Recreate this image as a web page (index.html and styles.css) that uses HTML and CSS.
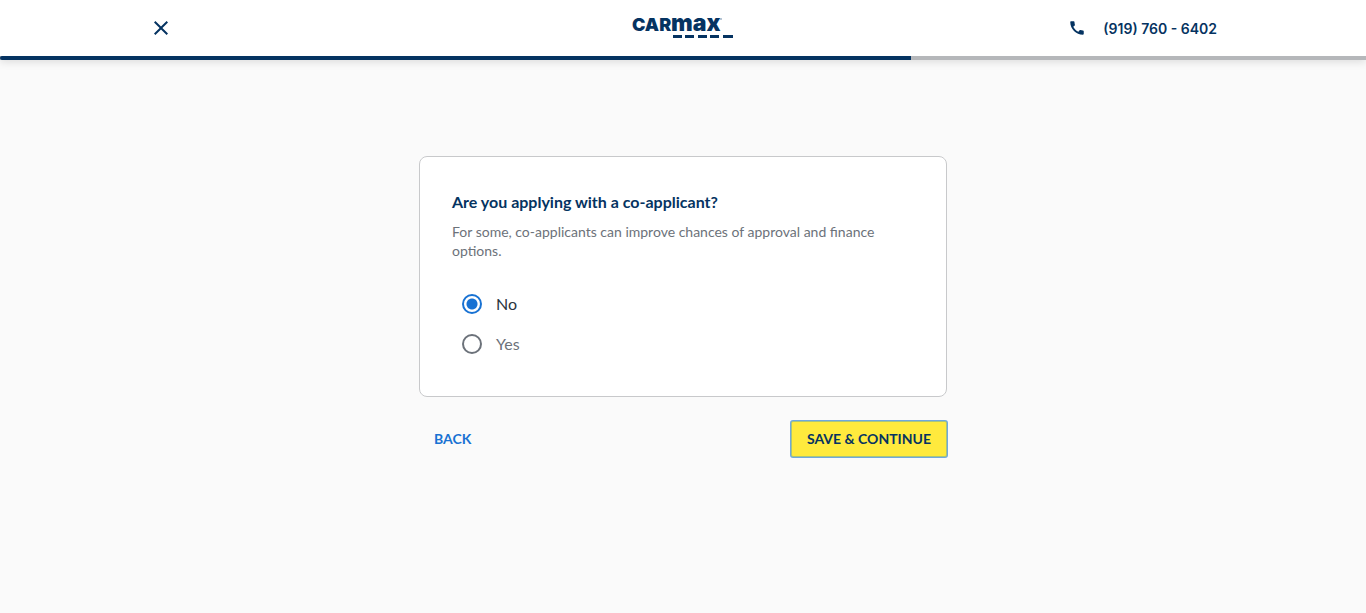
FILE: index.html
```html
<!DOCTYPE html>
<html lang="en">
<head>
<meta charset="utf-8">
<meta name="viewport" content="width=device-width, initial-scale=1">
<title>Co-applicant | CarMax</title>
<link rel="stylesheet" href="styles.css">
</head>
<body>
<header class="header">
  <div class="header-inner">
    <button class="close" type="button" aria-label="Close">
      <svg width="24" height="24" viewBox="0 0 24 24" aria-hidden="true"><path fill="currentColor" d="M19 6.41 17.59 5 12 10.59 6.41 5 5 6.41 10.59 12 5 17.59 6.41 19 12 13.41 17.59 19 19 17.59 13.41 12z"/></svg>
    </button>
    <a class="logo" href="#" aria-label="CarMax home">
      <svg width="102" height="48" viewBox="0 -12 102 48" aria-hidden="true">
        <text class="logo-text logo-car" x="0" y="15">CAR</text>
        <text class="logo-text logo-max" x="39" y="15">max</text>
        <circle cx="89" cy="3" r="1" fill="#9fb0c4"/>
        <path fill="#053361" d="M41 19h9v3h-9zM53 19h9v3h-9zM66 19h9v3h-9zM78 19h9v3h-9zM91 19h10v3H91z"/>
      </svg>
    </a>
    <a class="phone" href="tel:+19197606402">
      <svg width="18" height="18" viewBox="0 0 24 24" aria-hidden="true"><path fill="currentColor" d="M20.01 15.38c-1.23 0-2.42-.2-3.53-.56-.35-.12-.74-.03-1.01.24l-1.57 1.97c-2.83-1.35-5.48-3.9-6.89-6.83l1.95-1.66c.27-.28.35-.67.24-1.02-.37-1.11-.56-2.3-.56-3.53 0-.54-.45-.99-.99-.99H4.19C3.65 3 3 3.24 3 3.99 3 13.28 10.73 21 20.01 21c.71 0 .99-.63.99-1.18v-3.45c0-.54-.45-.99-.99-.99z"/></svg>
      <span>(919) 760 - 6402</span>
    </a>
  </div>
  <div class="progress" role="progressbar" aria-label="Application progress" aria-valuemin="0" aria-valuemax="3" aria-valuenow="2">
    <div class="progress-fill" style="width: 66.67%"></div>
  </div>
</header>
<main class="main">
  <form class="form">
    <fieldset class="card" aria-labelledby="question" aria-describedby="hint">
      <h1 class="question" id="question">Are you applying with a co-applicant?</h1>
      <p class="hint" id="hint">For some, co-applicants can improve chances of approval and finance options.</p>
      <div class="options">
        <label class="option"><input class="radio" type="radio" name="coapplicant" value="no" checked><span class="option-text">No</span></label>
        <label class="option"><input class="radio" type="radio" name="coapplicant" value="yes"><span class="option-text">Yes</span></label>
      </div>
    </fieldset>
    <div class="actions">
      <button class="button back" type="button">BACK</button>
      <button class="button save" type="submit">SAVE &amp; CONTINUE</button>
    </div>
  </form>
</main>
</body>
</html>
```
FILE: styles.css
```css
* {
  box-sizing: border-box;
}

body {
  margin: 0;
  background: #fafafa;
  color: #053361;
  font-family: Lato, "Liberation Sans", sans-serif;
  font-size: 16px;
}

.header {
  background: #fff;
  box-shadow: 0 2px 8px rgba(0, 0, 0, 0.12);
}

.header-inner {
  display: grid;
  grid-template-columns: 1fr auto 1fr;
  align-items: center;
  max-width: 1068px;
  height: 56px;
  margin: 0 auto;
}

.close {
  display: flex;
  justify-self: start;
  padding: 0;
  border: 0;
  background: none;
  color: #053361;
  cursor: pointer;
}

.logo {
  display: flex;
}

.logo svg {
  overflow: visible;
}

.logo-text {
  fill: #053361;
  font-family: Inter, sans-serif;
  font-weight: 900;
}

.logo-car {
  font-size: 18px;
}

.logo-max {
  font-size: 23px;
}

.phone {
  display: flex;
  align-items: center;
  justify-self: end;
  gap: 17px;
  color: #053361;
  font-family: Inter, sans-serif;
  font-size: 14px;
  font-weight: 600;
  text-decoration: none;
}

.progress {
  height: 4px;
  background: #b5b7ba;
}

.progress-fill {
  height: 100%;
  border-radius: 2px 0 0 2px;
  background: #053361;
}

.main {
  padding: 96px 16px 32px;
}

.form {
  max-width: 528px;
  margin: 0 auto;
}

.card {
  min-width: 0;
  margin: 0;
  padding: 32px;
  border: 1px solid #c8c9cb;
  border-radius: 8px;
  background: #fff;
}

.question {
  margin: 0 0 7px;
  font-size: 16px;
  font-weight: 700;
  line-height: 26px;
}

.hint {
  margin: 0;
  color: #6c727a;
  font-size: 14px;
  line-height: 19px;
}

.options {
  padding: 24px 10px 0;
}

.option {
  display: flex;
  align-items: center;
  gap: 14px;
  height: 40px;
  color: #6c727a;
  cursor: pointer;
}

.option:has(:checked) {
  color: #2a343d;
}

.option-text {
  padding-bottom: 2px;
}

.radio {
  width: 20px;
  height: 20px;
  margin: 0;
  border: 2px solid #6c727a;
  border-radius: 50%;
  background: #fff;
  appearance: none;
}

.radio:checked {
  border-color: #1872d3;
  background: radial-gradient(circle, #1872d3 5px, #fff 6px);
}

.actions {
  display: flex;
  justify-content: space-between;
  margin-top: 24px;
}

.button {
  height: 36px;
  padding: 0 15px 2px;
  border: 0;
  border-radius: 2px;
  font-family: Lato, sans-serif;
  font-size: 14px;
  font-weight: 700;
  cursor: pointer;
}

.back {
  background: none;
  color: #1872d3;
}

.save {
  border: 1px solid #a9c57c;
  background: #ffea3d;
  box-shadow: 0 0 0 1px #70a8de;
  color: #053361;
}
```
